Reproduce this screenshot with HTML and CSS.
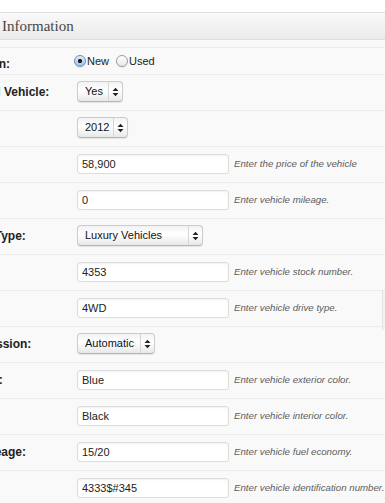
FILE: index.html
```html
<!DOCTYPE html>
<html lang="en">
<head>
  <meta charset="UTF-8">
  <title>Vehicle Information</title>
  <link rel="stylesheet" href="styles.css">
</head>
<body>
  <div class="postbox">
    <h3 class="postbox-title">Information</h3>
    <div class="inside">
      <div class="form-row first">
        <div class="label">Condition:</div>
        <div class="field">
          <label class="radio"><input type="radio" name="cond" checked>New</label>
          <label class="radio"><input type="radio" name="cond">Used</label>
        </div>
      </div>
      <div class="form-row">
        <div class="label">Featured Vehicle:</div>
        <div class="field">
          <div class="popup w-yes"><span class="popup-value">Yes</span><span class="stepper"><svg width="7" height="10" viewBox="0 0 7 10"><polygon points="0.5,4 3.5,0.8 6.5,4" /><polygon points="0.5,6 3.5,9.2 6.5,6" /></svg></span></div>
        </div>
      </div>
      <div class="form-row">
        <div class="label">Year:</div>
        <div class="field">
          <div class="popup w-year"><span class="popup-value">2012</span><span class="stepper"><svg width="7" height="10" viewBox="0 0 7 10"><polygon points="0.5,4 3.5,0.8 6.5,4" /><polygon points="0.5,6 3.5,9.2 6.5,6" /></svg></span></div>
        </div>
      </div>
      <div class="form-row">
        <div class="label">Price:</div>
        <div class="field">
          <input class="text-input" type="text" value="58,900">
          <span class="help">Enter the price of the vehicle</span>
        </div>
      </div>
      <div class="form-row">
        <div class="label">Mileage:</div>
        <div class="field">
          <input class="text-input" type="text" value="0">
          <span class="help">Enter vehicle mileage.</span>
        </div>
      </div>
      <div class="form-row">
        <div class="label">Vehicle Type:</div>
        <div class="field">
          <div class="popup w-type"><span class="popup-value">Luxury Vehicles</span><span class="stepper"><svg width="7" height="10" viewBox="0 0 7 10"><polygon points="0.5,4 3.5,0.8 6.5,4" /><polygon points="0.5,6 3.5,9.2 6.5,6" /></svg></span></div>
        </div>
      </div>
      <div class="form-row">
        <div class="label">Stock #:</div>
        <div class="field">
          <input class="text-input" type="text" value="4353">
          <span class="help">Enter vehicle stock number.</span>
        </div>
      </div>
      <div class="form-row">
        <div class="label">Drive:</div>
        <div class="field">
          <input class="text-input" type="text" value="4WD">
          <span class="help">Enter vehicle drive type.</span>
        </div>
      </div>
      <div class="form-row">
        <div class="label">Transmission:</div>
        <div class="field">
          <div class="popup w-trans"><span class="popup-value">Automatic</span><span class="stepper"><svg width="7" height="10" viewBox="0 0 7 10"><polygon points="0.5,4 3.5,0.8 6.5,4" /><polygon points="0.5,6 3.5,9.2 6.5,6" /></svg></span></div>
        </div>
      </div>
      <div class="form-row">
        <div class="label">Exterior :</div>
        <div class="field">
          <input class="text-input" type="text" value="Blue">
          <span class="help">Enter vehicle exterior color.</span>
        </div>
      </div>
      <div class="form-row">
        <div class="label">Interior:</div>
        <div class="field">
          <input class="text-input" type="text" value="Black">
          <span class="help">Enter vehicle interior color.</span>
        </div>
      </div>
      <div class="form-row">
        <div class="label">Fuel Mileage:</div>
        <div class="field">
          <input class="text-input" type="text" value="15/20">
          <span class="help">Enter vehicle fuel economy.</span>
        </div>
      </div>
      <div class="form-row">
        <div class="label">VIN:</div>
        <div class="field">
          <input class="text-input" type="text" value="4333$#345">
          <span class="help">Enter vehicle identification number.</span>
        </div>
      </div>
    </div>
  </div>
  <div class="side-tab"></div>
</body>
</html>
```

FILE: styles.css
```css
* {
  box-sizing: border-box;
}
html, body {
  margin: 0;
  padding: 0;
  background: #fff;
  overflow: hidden;
}
body {
  font-family: "Liberation Sans", Arial, sans-serif;
  color: #333;
  position: relative;
  height: 503px;
}
/* box is wider than the window, left part is cut off */
.postbox {
  margin: 12px 0 0 -50px;
  border-top: 1px solid #dfdfdf;
  background: #f9f9f9;
}
.postbox-title {
  margin: 0;
  height: 27px;
  padding-left: 52px;
  font-family: "Liberation Serif", "Times New Roman", serif;
  font-size: 15px;
  font-weight: normal;
  line-height: 27px;
  color: #464646;
  background: linear-gradient(#f9f9f9, #ebebeb);
  border-bottom: 1px solid #dfdfdf;
}
.inside {
  padding-top: 7px;
}
.form-row {
  display: flex;
  align-items: center;
  height: 36px;
  padding-bottom: 2px;
  border-top: 1px solid #ececec;
}
.form-row.first {
  height: 27px;
  padding-bottom: 0;
}
.label {
  flex: 0 0 127px;
  font-size: 12px;
  font-weight: bold;
  color: #222;
  white-space: nowrap;
}
.form-row.first .label {
  padding-top: 6px;
}
.field {
  display: flex;
  align-items: center;
}
.radio {
  display: flex;
  align-items: center;
  font-size: 11px;
  color: #222;
  margin-right: 7px;
}
.radio input {
  appearance: none;
  -webkit-appearance: none;
  width: 12px;
  height: 12px;
  margin: 0 1px 0 -3px;
  border-radius: 50%;
  border: 1px solid #9c9c9c;
  background: linear-gradient(#fff, #e9e9e9);
  box-shadow: 0 1px 1px rgba(0,0,0,0.08);
}
.radio + .radio input {
  margin-left: 0;
}
.radio input:checked {
  border-color: #6f8fb3;
  background: radial-gradient(circle, #1c1c1c 0 1.8px, transparent 2.4px), linear-gradient(#e3eefa, #9cc0e8);
}
.popup {
  display: flex;
  align-items: stretch;
  height: 21px;
  border: 1px solid #cbcbcb;
  border-bottom-color: #b5b5b5;
  border-radius: 4px;
  background: linear-gradient(#f3f3f3, #ffffff 45%, #e8e8e8);
  box-shadow: 0 1px 1px rgba(0,0,0,0.08);
  font-size: 11px;
  color: #111;
}
.popup-value {
  flex: 1;
  padding-left: 7px;
  line-height: 19px;
  white-space: nowrap;
}
.stepper {
  flex: 0 0 14px;
  display: flex;
  align-items: center;
  justify-content: center;
  border-left: 1px solid #d6d6d6;
}
.stepper svg {
  fill: #222;
}
.w-yes { width: 46px; }
.w-year { width: 51px; }
.w-type { width: 126px; }
.w-trans { width: 78px; }
.text-input {
  width: 152px;
  height: 20px;
  margin: 0 5px 0 0;
  padding: 0 4px;
  border: 1px solid #dcdcdc;
  border-radius: 3px;
  background: #fff;
  box-shadow: inset 0 1px 2px rgba(0,0,0,0.06);
  font-family: "Liberation Sans", Arial, sans-serif;
  font-size: 11px;
  color: #222;
  outline: none;
}
.help {
  font-size: 9.7px;
  font-style: italic;
  color: #5c5c5c;
  white-space: nowrap;
}
.side-tab {
  position: absolute;
  right: 0;
  top: 290px;
  width: 3px;
  height: 40px;
  background: #f3f3f3;
  border-left: 1px solid #e2e2e2;
}
```
